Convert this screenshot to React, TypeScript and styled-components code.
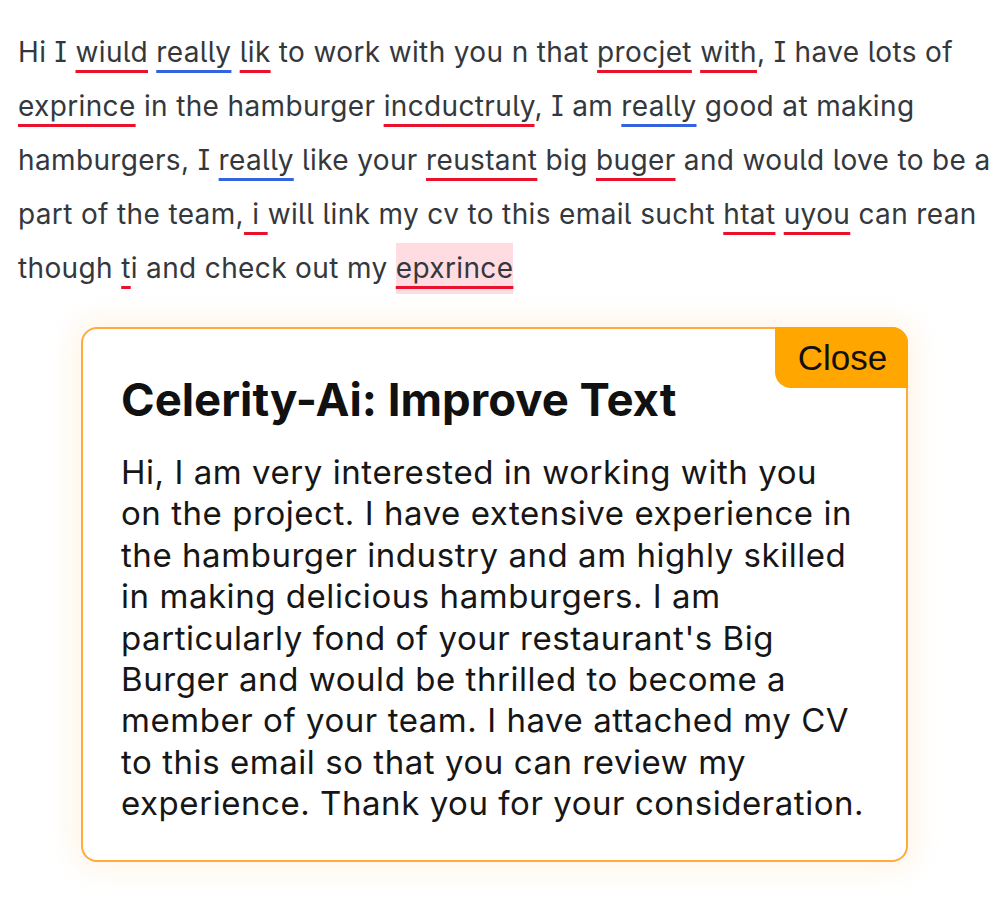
import React from "react";
import styled, { createGlobalStyle } from "styled-components";

const Global = createGlobalStyle`
  html, body { margin: 0; padding: 0; background: #ffffff; }
  body { font-family: Inter, "Noto Sans", sans-serif; }
`;

const Page = styled.div`
  width: 1000px;
  height: 911px;
  box-sizing: border-box;
  padding: 25px 0 0 18px;
  overflow: hidden;
`;

const Draft = styled.p`
  margin: 0;
  width: 980px;
  font-family: Inter, sans-serif;
  font-feature-settings: "cv05", "cv08";
  font-size: 28px;
  line-height: 54px;
  color: #34383c;
  letter-spacing: 0.36px;
`;

const Mark = styled.span<{ $tone: "red" | "blue" }>`
  text-decoration: underline;
  text-decoration-thickness: 3px;
  text-underline-offset: 8px;
  text-decoration-skip-ink: none;
  text-decoration-color: ${(p) => (p.$tone === "red" ? "#e8122d" : "#3563e0")};
`;

const Hi = styled(Mark)`
  background: #ffdce2;
  padding: 8px 0 9px;
`;

const Popup = styled.div`
  position: relative;
  margin: 32px 0 0 63px;
  width: 827px;
  height: 535px;
  box-sizing: border-box;
  border: 2px solid #ffab3d;
  border-radius: 16px;
  background: #fff;
  box-shadow: 0 0 28px 6px rgba(255, 170, 60, 0.14);
  padding: 45px 20px 0 38px;
`;

const CloseButton = styled.button`
  position: absolute;
  top: -2px;
  right: -2px;
  width: 133px;
  height: 61px;
  border: none;
  background: #ffa600;
  border-radius: 0 16px 0 16px;
  font-family: "Liberation Sans", Arial, sans-serif;
  font-size: 35px;
  color: #111;
  padding: 0 0 0 2px;
  cursor: pointer;
`;

const Title = styled.h2`
  margin: 0;
  font-family: Inter, sans-serif;
  font-weight: 700;
  font-size: 45.5px;
  line-height: 52px;
  color: #111;
`;

const Body = styled.p`
  margin: 26px 0 0;
  font-family: Inter, sans-serif;
  font-size: 33px;
  line-height: 41.4px;
  letter-spacing: 0.55px;
  color: #161616;
  white-space: nowrap;
`;

const lines = [
  "Hi, I am very interested in working with you",
  "on the project. I have extensive experience in",
  "the hamburger industry and am highly skilled",
  "in making delicious hamburgers. I am",
  "particularly fond of your restaurant's Big",
  "Burger and would be thrilled to become a",
  "member of your team. I have attached my CV",
  "to this email so that you can review my",
  "experience. Thank you for your consideration.",
];

export default function App() {
  return (
    <>
      <Global />
      <Page>
        <Draft>
          Hi I <Mark $tone="red">wiuld</Mark> <Mark $tone="blue">really</Mark>{" "}
          <Mark $tone="red">lik</Mark> to work with you n that{" "}
          <Mark $tone="red">procjet</Mark> <Mark $tone="red">with</Mark>, I have lots of{" "}
          <Mark $tone="red">exprince</Mark> in the hamburger{" "}
          <Mark $tone="red">incductruly</Mark>, I am <Mark $tone="blue">really</Mark> good at
          making hamburgers, I <Mark $tone="blue">really</Mark> like your{" "}
          <Mark $tone="red">reustant</Mark> big <Mark $tone="red">buger</Mark> and would love to
          be a part of the team,<Mark $tone="red"> i </Mark>will link my cv to this email sucht{" "}
          <Mark $tone="red">htat</Mark> <Mark $tone="red">uyou</Mark> can rean though{" "}
          <Mark $tone="red">t</Mark>i and check out my <Hi $tone="red">epxrince</Hi>
        </Draft>
        <Popup>
          <CloseButton>Close</CloseButton>
          <Title>Celerity-Ai: Improve Text</Title>
          <Body>
            {lines.map((l, i) => (
              <React.Fragment key={i}>
                {l}
                {i < lines.length - 1 && <br />}
              </React.Fragment>
            ))}
          </Body>
        </Popup>
      </Page>
    </>
  );
}
